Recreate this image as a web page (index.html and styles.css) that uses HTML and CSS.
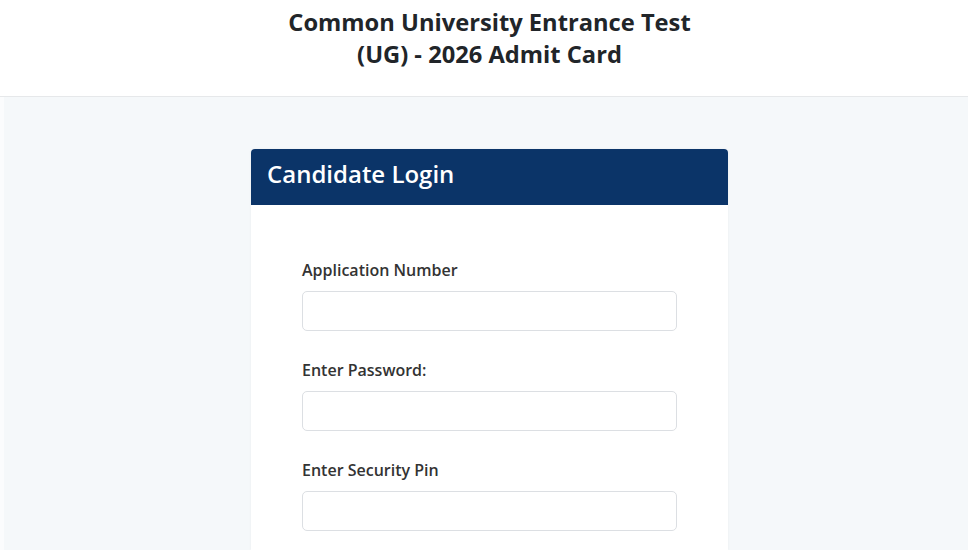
FILE: index.html
```html
<!DOCTYPE html>
<html lang="en">
<head>
<meta charset="utf-8">
<title>CUET (UG) - 2026 Admit Card</title>
<link rel="stylesheet" href="styles.css">
</head>
<body>
<header class="top">
  <h1 class="title">Common University Entrance Test<br>(UG) - 2026 Admit Card</h1>
</header>
<main class="stage">
  <section class="card">
    <div class="card-head">Candidate Login</div>
    <form class="card-body">
      <div class="field">
        <label class="label" for="app">Application Number</label>
        <input class="input" id="app" type="text">
      </div>
      <div class="field">
        <label class="label" for="pwd">Enter Password:</label>
        <input class="input" id="pwd" type="password">
      </div>
      <div class="field">
        <label class="label" for="pin">Enter Security Pin</label>
        <input class="input" id="pin" type="text">
      </div>
    </form>
  </section>
</main>
</body>
</html>
```
FILE: styles.css
```css
* { box-sizing: border-box; }
html, body { margin: 0; padding: 0; }
body {
  font-family: "Open Sans", "Noto Sans", "Liberation Sans", sans-serif;
  background: #f5f8fa;
  color: #222;
  overflow: hidden;
  height: 550px;
}
.top {
  background: #fff;
  height: 97px;
  border-bottom: 1px solid #e6e8ea;
  padding-top: 6px;
  padding-left: 11px;
}
.title {
  margin: 0;
  text-align: center;
  font-size: 23.7px;
  line-height: 32px;
  font-weight: 700;
  color: #212529;
}
.stage {
  display: flex;
  justify-content: center;
  padding: 52px 0 0 7px;
  border-left: 4px solid #fbfcfd;
  height: 453px;
}
.card {
  width: 477px;
  background: #fff;
  border-radius: 4px 4px 0 0;
  box-shadow: 0 0 3px rgba(0,0,0,0.05);
}
.card-head {
  background: #0b3468;
  color: #fff;
  height: 56px;
  border-radius: 4px 4px 0 0;
  padding: 0 16px;
  font-size: 24px;
  font-weight: 600;
  line-height: 50px;
}
.card-body {
  padding: 54px 51px 0 51px;
  display: flex;
  flex-direction: column;
  gap: 28px;
}
.field {
  display: flex;
  flex-direction: column;
  gap: 10px;
}
.label {
  font-size: 16px;
  font-weight: 600;
  color: #333;
  line-height: 22px;
}
.input {
  width: 375px;
  height: 40px;
  border: 1px solid #dcdfe3;
  border-radius: 5px;
  background: #fff;
  font: inherit;
}
```
